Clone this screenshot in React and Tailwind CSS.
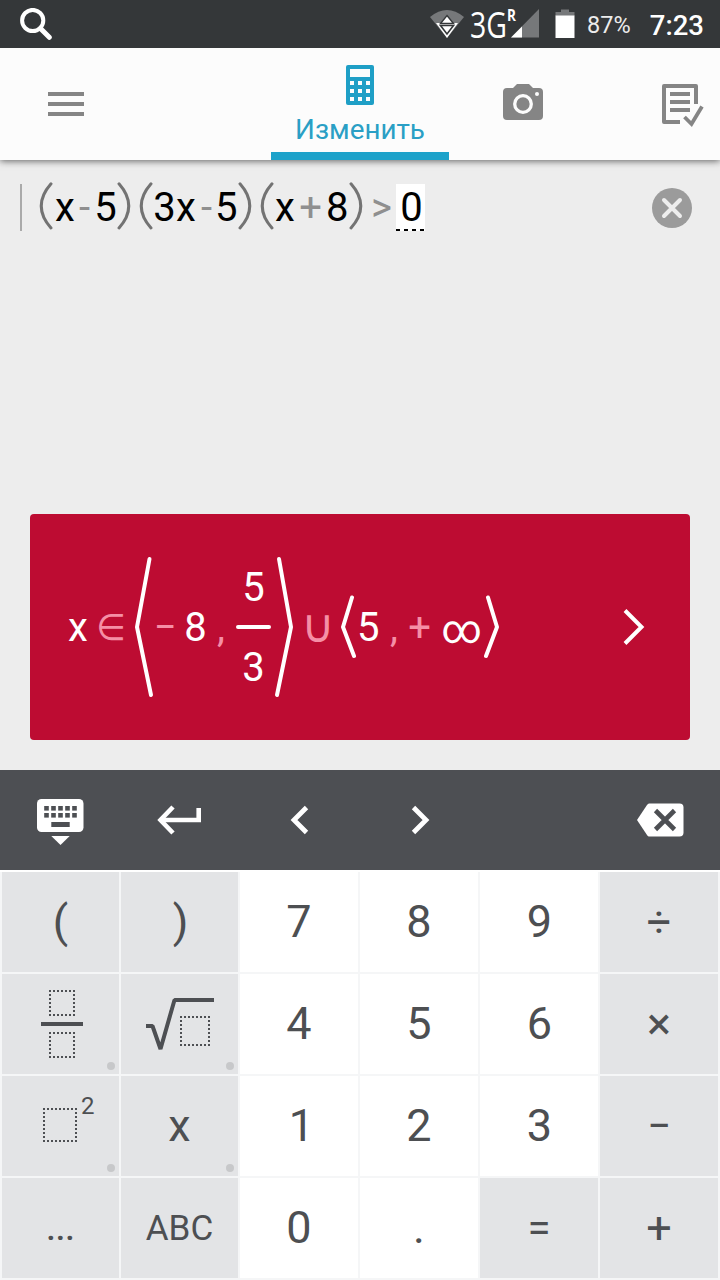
import React from "react";

const ROBOTO = "font-['Roboto','Noto_Sans',sans-serif]";

function StatusBar() {
  return (
    <div className="relative z-20 flex h-12 shrink-0 items-center bg-[#343739] pl-5 pr-4 text-white">
      <svg className="h-8 w-8" viewBox="0 0 32 32" fill="none" stroke="#fff">
        <circle cx="12.7" cy="12.5" r="10.6" strokeWidth="4" />
        <path d="M20.5 20.5L29.3 29.3" strokeWidth="5" strokeLinecap="round" />
      </svg>
      <svg className="ml-[377px] h-12 w-9" viewBox="0 0 36 48">
        <path d="M1 17Q18 3 35 17L18 38Z" fill="#76787a" />
        <path d="M7 23H29L18 38Z" fill="#fff" />
        <path d="M18 15.5L24.5 23.5H11.5Z" fill="#fff" stroke="#343739" strokeWidth="1.4" />
        <path d="M11.5 25.5H24.5L18 34Z" fill="#fff" stroke="#343739" strokeWidth="1.6" />
      </svg>
      <div className="ml-[5px] w-[37px] whitespace-nowrap">
        <span className="inline-block origin-left scale-x-[0.78] font-['Open_Sans',sans-serif] text-[36.500px] leading-[46px]">3G</span>
      </div>
      <div className="w-[10px] pb-4">
        <span className="inline-block origin-left scale-x-[0.85] font-['Open_Sans',sans-serif] text-[16px] font-bold leading-4">R</span>
      </div>
      <svg className="-ml-[6px] h-12 w-7" viewBox="0 0 28 48">
        <path d="M28 9V37.5H0Z" fill="#76787a" />
        <path d="M11 26.5V37.5H0Z" fill="#fff" />
      </svg>
      <svg className="ml-4 h-12 w-5" viewBox="0 0 20 48">
        <path d="M6 9.500H14V12H19.500V16H.5V12H6Z" fill="#76787a" />
        <path d="M.5 15.500H19.500V38H.5Z" fill="#fff" />
      </svg>
      <span className="ml-[12px] w-[45px] whitespace-nowrap text-[23.500px] leading-8 text-[#ececec] mt-[2px]">87%</span>
      <span className="ml-auto whitespace-nowrap text-[27.500px] font-medium leading-8 mt-[3px]">7:23</span>
    </div>
  );
}

function Header() {
  return (
    <header className="relative z-10 flex h-28 shrink-0 bg-[#fcfcfc] shadow-[0_1px_7px_rgba(0,0,0,0.6)]">
      <div className="flex w-[271px] items-center pl-12">
        <div className="flex w-9 flex-col gap-1.5">
          <div className="h-1 bg-[#858585]" />
          <div className="h-1 bg-[#858585]" />
          <div className="h-1 bg-[#858585]" />
        </div>
      </div>
      <div className="flex w-[178px] flex-col items-center border-b-8 border-[#1da2ca] pt-[17px]">
        <svg className="h-10 w-7 shrink-0" viewBox="0 0 28 40">
          <rect width="28" height="40" rx="2" fill="#1f9fc6" />
          <rect x="4" y="4" width="20" height="8" fill="#fcfcfc" />
          {[16, 24, 32].map((y) =>
            [4, 12, 20].map((x) => <rect key={`${x}-${y}`} x={x} y={y} width="4" height="4" fill="#fcfcfc" />)
          )}
        </svg>
        <span className="mt-[9px] text-[27.800px] leading-8 text-[#2a9fc5]">Изменить</span>
      </div>
      <div className="flex flex-1 items-center pl-[50px]">
        <svg className="h-12 w-12" viewBox="0 0 48 48">
          <path d="M18 4H30L34 8H40Q44 8 44 12V36Q44 40 40 40H8Q4 40 4 36V12Q4 8 8 8H14Z" fill="#858585" />
          <circle cx="24" cy="24" r="8.300" fill="none" stroke="#fcfcfc" strokeWidth="3.300" />
          <circle cx="38" cy="14" r="2" fill="#fcfcfc" />
        </svg>
        <svg className="ml-auto mr-[16px] h-12 w-[46px] shrink-0" viewBox="0 0 46 48" fill="none" stroke="#858585" strokeWidth="4">
          <path d="M22 42H6V6H38V24" strokeLinejoin="round" />
          <path d="M12 14H32M12 22H32M12 30H32" />
          <path d="M26.500 37L33.500 44L44 26.500" strokeWidth="3.800" />
        </svg>
      </div>
    </header>
  );
}

function Paren({ right, className = "" }) {
  return (
    <svg className={`h-[50px] w-[15px] shrink-0 ${className}`} viewBox="0 0 15 50" fill="none" stroke="#737373" strokeWidth="3" strokeLinecap="round">
      <path d={right ? "M2 1.800Q21.500 24 2 46" : "M13 1.800Q-6.500 24 13 46"} />
    </svg>
  );
}

function Expression() {
  const op = "text-[#8f8f8f]";
  return (
    <div className="flex h-12 items-center pl-5 pr-7">
      <div className="mr-4 mt-px h-[47px] w-[2px] shrink-0 bg-[#aaaaaa]" />
      <div className="flex h-12 items-center text-center text-[40px] leading-[46px] text-black [&>span]:pt-[2px]">
        <Paren />
        <span className="ml-[2px] w-5">x</span>
        <span className={`ml-1 w-[11px] ${op}`}>-</span>
        <span className="ml-[4px] w-[23px]">5</span>
        <Paren right />
        <Paren className="ml-[6px]" />
        <span className="w-[23px]">3</span>
        <span className="w-5">x</span>
        <span className={`ml-[5px] w-[11px] ${op}`}>-</span>
        <span className="ml-[3px] w-[22px]">5</span>
        <Paren right className="ml-px" />
        <Paren className="ml-[6px]" />
        <span className="ml-px w-5">x</span>
        <span className={`ml-1 w-[23px] ${op}`}>+</span>
        <span className="ml-[4px] w-[22px]">8</span>
        <Paren right className="ml-px" />
        <span className={`ml-[7px] w-[21px] ${op}`}>&gt;</span>
        <div className="ml-[4px] flex w-[29px] flex-col pt-px">
          <span className="h-[45px] bg-white pl-[2px] leading-[47px]">0</span>
          <span className="h-[2px] bg-[repeating-linear-gradient(90deg,#000_0_4px,#fff_4px_8px)]" />
        </div>
      </div>
      <svg className="ml-auto mt-[2px] h-10 w-10" viewBox="0 0 40 40">
        <circle cx="20" cy="20" r="20" fill="#9b9b9b" />
        <path d="M12 12L28 28M28 12L12 28" stroke="#ededed" strokeWidth="4" strokeLinecap="round" />
      </svg>
    </div>
  );
}

function Result() {
  const pink = "text-[#f58fa6]";
  const angle = { fill: "none", stroke: "#fff", strokeWidth: 4, strokeLinecap: "round", strokeLinejoin: "round" };
  return (
    <div className="mx-[30px] flex h-[226px] items-center rounded bg-[#bd0c32] pl-[38px] pr-11 text-center text-[40px] leading-[46px] text-white [&>span]:pt-[2px]">
      <span className="w-5">x</span>
      <div className={`ml-[8px] w-[30px] font-['DejaVu_Sans',sans-serif] text-[34px] ${pink}`}>
        <span className="inline-block scale-y-[1.08]">∈</span>
      </div>
      <svg className="ml-[8px] h-[142px] w-[20px] shrink-0" viewBox="0 0 20 142" {...angle}>
        <path d="M15.500 3L3 71L17 139" />
      </svg>
      <span className={`w-[23px] ${pink}`}>−</span>
      <span className="ml-[7px] w-[23px]">8</span>
      <span className={`ml-[10px] w-2 ${pink}`}>,</span>
      <div className="ml-[11px] flex w-[35px] flex-col items-center">
        <span className="h-[46px] pt-px">5</span>
        <span className="my-[15px] h-1 w-full rounded-full bg-white" />
        <span className="h-[46px] pt-px">3</span>
      </div>
      <svg className="ml-[3px] h-[142px] w-[20px] shrink-0" viewBox="0 0 20 142" {...angle}>
        <path d="M5 3L17 71L3 139" />
      </svg>
      <div className={`ml-[8px] flex w-[31px] justify-center pb-[2px] font-['DejaVu_Sans',sans-serif] text-[38px] ${pink}`}>
        <span className="inline-block scale-x-[1.2] scale-y-[1.22]">∪</span>
      </div>
      <svg className="ml-[7px] h-[64px] w-4 shrink-0" viewBox="0 0 16 64" {...angle}>
        <path d="M12 2.500L3 32L14 61" />
      </svg>
      <span className="ml-[1px] w-[22px]">5</span>
      <span className={`ml-[11px] w-2 ${pink}`}>,</span>
      <span className={`ml-[10px] w-[23px] ${pink}`}>+</span>
      <div className="ml-[10px] flex w-[42px] justify-center pt-[5px]">
        <span className="inline-block scale-x-[0.98]">∞</span>
      </div>
      <svg className="ml-[1px] h-[64px] w-4 shrink-0" viewBox="0 0 16 64" {...angle}>
        <path d="M4 2.500L13 32L2 61" />
      </svg>
      <svg className="ml-auto h-9 w-6" viewBox="0 0 24 36" fill="none" stroke="#fff" strokeWidth="4">
        <path d="M3 1.500L19.500 18L3 34.500" />
      </svg>
    </div>
  );
}

function Toolbar() {
  return (
    <div className="grid h-[100px] shrink-0 grid-cols-6 place-items-center bg-[#4d4f53]">
      <svg className="h-[50px] w-[47px]" viewBox="0 0 47 50">
        <rect y="4" width="46.500" height="33" rx="4.500" fill="#fff" />
        {[11, 18].map((y) =>
          [7, 14, 21, 28, 35].map((x) => <rect key={`${x}-${y}`} x={x + 0.2} y={y} width="4.600" height="4.600" fill="#4d4f53" />)
        )}
        <rect x="14.300" y="27" width="18.400" height="5" fill="#4d4f53" />
        <path d="M14.300 41H32.700L23.500 50Z" fill="#fff" />
      </svg>
      <svg className="h-[32px] w-[48px]" viewBox="0 0 48 32" fill="none" stroke="#fff" strokeWidth="4.600">
        <path d="M42.700 4V16H6" />
        <path d="M17 3L4.500 16L17 29" />
      </svg>
      <svg className="h-[32px] w-6" viewBox="0 0 24 32" fill="none" stroke="#fff" strokeWidth="4.800">
        <path d="M18.500 3.500L6 16L18.500 28.500" />
      </svg>
      <svg className="h-[32px] w-6" viewBox="0 0 24 32" fill="none" stroke="#fff" strokeWidth="4.800">
        <path d="M5.500 3.500L18 16L5.500 28.500" />
      </svg>
      <span />
      <svg className="h-[34px] w-[47px]" viewBox="0 0 47 34">
        <path d="M12 .5H42.500Q46.500 .5 46.500 4.500V29.500Q46.500 33.500 42.500 33.500H12Q11 33.500 10 32L0 17L10 2Q11 .5 12 .5Z" fill="#fff" />
        <path d="M18.500 7.500L37.500 26.500M37.500 7.500L18.500 26.500" stroke="#4d4f53" strokeWidth="4.600" />
      </svg>
    </div>
  );
}

const DOTTED = { fill: "none", stroke: "#4d4f53", strokeWidth: 2, strokeDasharray: "2 2", strokeDashoffset: 1 };

function Key({ children, size = "text-[45px]", light, dot, shift = "" }) {
  return (
    <div className={`relative flex items-center justify-center overflow-hidden leading-[52px] text-[#4d4f52] ${size} ${light ? "bg-white" : "bg-[#e3e4e6]"}`}>
      <span className={shift}>{children}</span>
      {dot && <span className="absolute bottom-1 right-1 h-2 w-2 rounded-full bg-[#c7c8ca]" />}
    </div>
  );
}

function FractionIcon() {
  return (
    <svg className="h-[70px] w-[42px]" viewBox="0 0 42 70">
      <rect x="9" y="2" width="24" height="24" {...DOTTED} />
      <rect y="33" width="42" height="4" fill="#4d4f53" />
      <rect x="9" y="44" width="24" height="24" {...DOTTED} />
    </svg>
  );
}

function RootIcon() {
  return (
    <svg className="h-[56px] w-[68px]" viewBox="0 0 68 56">
      <path d="M0 30H6.500L14.500 53L28.500 4H68" fill="none" stroke="#4d4f53" strokeWidth="4" strokeLinejoin="bevel" />
      <rect x="35" y="21" width="28" height="28" {...DOTTED} />
    </svg>
  );
}

function PowerIcon() {
  return (
    <span className="flex h-[56px] w-[52px] items-start">
      <svg className="mt-[10px] h-[34px] w-[34px] shrink-0" viewBox="0 0 34 34">
        <rect x="1" y="1" width="32" height="32" {...DOTTED} />
      </svg>
      <span className="ml-[4px] -mt-[6px] text-[24px] leading-[28px]">2</span>
    </span>
  );
}

function Keypad() {
  return (
    <div className="h-[410px] shrink-0 bg-[#f5f6f7]">
      <div className="h-[2px] bg-white" />
      <div className="grid h-[406px] grid-cols-[117px_117px_118px_118px_118px_118px] grid-rows-4 gap-[2px] pl-[2px]">
        <Key>(</Key>
        <Key shift="ml-[2px]">)</Key>
        <Key light>7</Key>
        <Key light>8</Key>
        <Key light shift="ml-px">9</Key>
        <Key size="text-[43px]">÷</Key>
        <Key dot shift="flex ml-[3px]"><FractionIcon /></Key>
        <Key dot shift="flex"><RootIcon /></Key>
        <Key light>4</Key>
        <Key light>5</Key>
        <Key light shift="ml-px">6</Key>
        <Key>×</Key>
        <Key dot shift="flex ml-[17px]"><PowerIcon /></Key>
        <Key dot>x</Key>
        <Key light shift="ml-[5px]">1</Key>
        <Key light>2</Key>
        <Key light shift="ml-px">3</Key>
        <Key size="text-[42px]">−</Key>
        <Key size="text-[34px] font-medium">...</Key>
        <Key size="text-[35px]" shift="pt-px">ABC</Key>
        <Key light>0</Key>
        <Key light>.</Key>
        <Key size="text-[42px]">=</Key>
        <Key>+</Key>
      </div>
    </div>
  );
}

export default function App() {
  return (
    <div className={`flex h-[1280px] w-[720px] flex-col overflow-hidden bg-[#ededed] ${ROBOTO}`}>
      <StatusBar />
      <Header />
      <main className="flex flex-1 flex-col justify-between pb-[30px] pt-[23px]">
        <Expression />
        <Result />
      </main>
      <Toolbar />
      <Keypad />
    </div>
  );
}
